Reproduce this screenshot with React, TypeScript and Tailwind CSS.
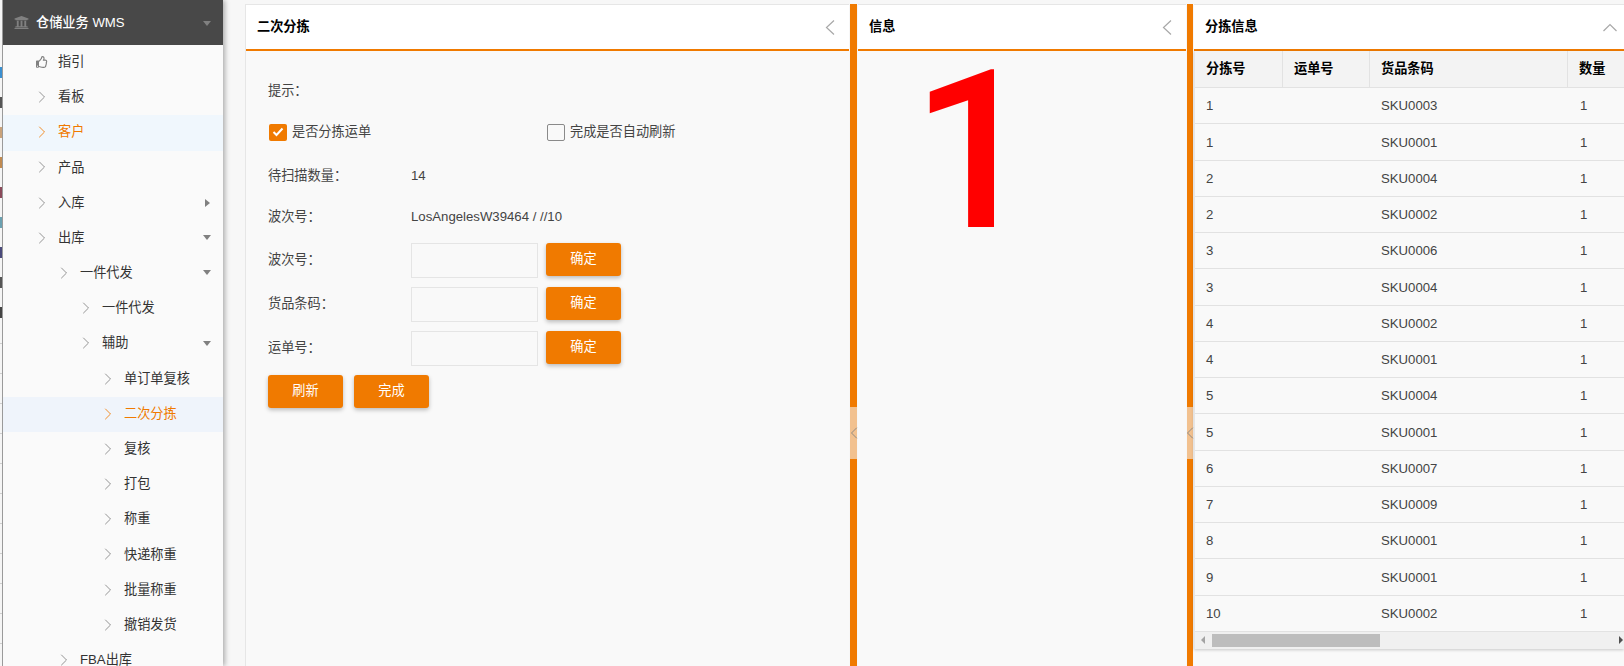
import { ChevronLeft, ChevronRight } from 'lucide-react'
import { FaRegThumbsUp, FaUniversity } from 'react-icons/fa'

type MenuItem = {
  label: string
  indent: number
  active?: boolean
  arrow?: 'right' | 'down'
  thumb?: boolean
  tint?: string
}

const menu: MenuItem[] = [
  { label: '指引', indent: 0, thumb: true },
  { label: '看板', indent: 0 },
  { label: '客户', indent: 0, active: true, tint: 'bg-[#f0f7fd]' },
  { label: '产品', indent: 0 },
  { label: '入库', indent: 0, arrow: 'right' },
  { label: '出库', indent: 0, arrow: 'down' },
  { label: '一件代发', indent: 1, arrow: 'down' },
  { label: '一件代发', indent: 2 },
  { label: '辅助', indent: 2, arrow: 'down' },
  { label: '单订单复核', indent: 3 },
  { label: '二次分拣', indent: 3, active: true, tint: 'bg-[#eff4fb]' },
  { label: '复核', indent: 3 },
  { label: '打包', indent: 3 },
  { label: '称重', indent: 3 },
  { label: '快递称重', indent: 3 },
  { label: '批量称重', indent: 3 },
  { label: '撤销发货', indent: 3 },
  { label: 'FBA出库', indent: 1 },
]

const rows = [
  ['1', 'SKU0003'],
  ['1', 'SKU0001'],
  ['2', 'SKU0004'],
  ['2', 'SKU0002'],
  ['3', 'SKU0006'],
  ['3', 'SKU0004'],
  ['4', 'SKU0002'],
  ['4', 'SKU0001'],
  ['5', 'SKU0004'],
  ['5', 'SKU0001'],
  ['6', 'SKU0007'],
  ['7', 'SKU0009'],
  ['8', 'SKU0001'],
  ['9', 'SKU0001'],
  ['10', 'SKU0002'],
]

const indentClass = ['pl-[30px]', 'pl-[52px]', 'pl-[74px]', 'pl-[96px]']

// the page behind the drawer peeks out by 2px at the left edge
const peekMarks = ['bg-[#f5f5f5]', 'bg-[#3a8fd0]', 'bg-[#555555]', 'bg-[#c9a27a]', 'bg-[#c08a50]', 'bg-[#8a4a5a]', 'bg-[#6aa0b0]', 'bg-[#4a4a7a]', 'bg-[#555555]', 'bg-[#444444]']

function LeftPeek() {
  return (
    <div className="w-[3px] shrink-0 bg-[#f5f5f5] border-r border-[#9a9a9a] overflow-hidden">
      <div className="h-[27px]" />
      {peekMarks.map((color, i) => (
        <div key={i} className="h-[30px] flex items-center">
          <div className={`h-[11px] w-full ${color}`} />
        </div>
      ))}
      <div className="h-[17px] border-b border-[#cfcfcf]" />
      {Array.from({ length: 11 }).map((_, i) => (
        <div key={i} className="h-[30px] border-b border-[#cfcfcf]" />
      ))}
    </div>
  )
}

function Sidebar() {
  return (
    <aside className="w-[223px] h-[666px] shrink-0 overflow-hidden flex bg-[#fafafa] shadow-[2px_0_5px_rgba(0,0,0,0.3)] relative z-10">
      <LeftPeek />
      <div className="flex-1 min-w-0">
        <div className="h-[45px] bg-[#484848] flex items-center pl-[11px] pr-[12px]">
          <FaUniversity size={15} className="text-[#808080]" />
          <span className="ml-[7px] text-[13.2px] text-white font-medium">仓储业务 WMS</span>
          <span className="ml-auto mt-[2px] w-0 h-0 border-x-[4px] border-x-transparent border-t-[5px] border-t-[#808080]" />
        </div>
        {menu.map((item, i) => (
          <div key={i} className={`h-[35.2px] pb-[1.5px] flex items-center pr-[12px] text-[13.2px] ${indentClass[item.indent]} ${item.tint ?? ''}`}>
            {item.thumb ? (
              <FaRegThumbsUp size={12} className="text-[#808080] ml-[3px] mr-[10px]" />
            ) : (
              <ChevronRight size={20} strokeWidth={1} className={`-ml-px mr-[6px] ${item.active ? 'text-[#f07a00]' : 'text-[#808080]'}`} />
            )}
            <span className={item.active ? 'text-[#f07a00]' : 'text-[#333333]'}>{item.label}</span>
            {item.arrow === 'down' && (
              <span className="ml-auto w-0 h-0 border-x-[4px] border-x-transparent border-t-[5px] border-t-[#808080]" />
            )}
            {item.arrow === 'right' && (
              <span className="ml-auto mr-[1px] w-0 h-0 border-y-[4px] border-y-transparent border-l-[5px] border-l-[#808080]" />
            )}
          </div>
        ))}
      </div>
    </aside>
  )
}

function CollapseLeft() {
  return (
    <svg width="10" height="15" viewBox="0 0 10 15" className="text-[#a8a8a8]">
      <path d="M9 0.5L1.5 7.5L9 14.5" fill="none" stroke="currentColor" strokeWidth="1.2" />
    </svg>
  )
}

function CollapseUp() {
  return (
    <svg width="14" height="9" viewBox="0 0 14 9" className="text-[#a8a8a8] -mr-[7px]">
      <path d="M0.5 8L7 1.5L13.5 8" fill="none" stroke="currentColor" strokeWidth="1.2" />
    </svg>
  )
}

function PanelHeader({ title, icon }: { title: string; icon: React.ReactNode }) {
  return (
    <div className="h-[47px] shrink-0 bg-white border-t border-[#e6e6e6] border-b-2 border-b-[#f07a00] flex items-center justify-between pl-[11px] pr-[14px]">
      <span className="text-[13.2px] font-bold text-black">{title}</span>
      {icon}
    </div>
  )
}

function Splitter({ width }: { width: string }) {
  return (
    <div className={`${width} mx-px shrink-0 h-full bg-[#f07a00] flex flex-col`}>
      <div className="h-[403px]" />
      <div className="h-[52px] bg-[#f2c18f] flex items-center justify-center">
        <ChevronLeft size={20} strokeWidth={1} className="text-[#808080] shrink-0" />
      </div>
    </div>
  )
}

function ConfirmRow({ label }: { label: string }) {
  return (
    <div className="h-[44px] flex items-start">
      <span className="w-[143px] mt-[7px] text-[#444444]">{label}</span>
      <input className="w-[127px] h-[35px] border border-[#e5e5e5] bg-transparent" />
      <button className="ml-[8px] w-[75px] h-[33px] pb-[2px] rounded-[3px] bg-[#f07a00] text-white shadow-[0_2px_4px_rgba(0,0,0,0.25)]">确定</button>
    </div>
  )
}

function SortPanel() {
  return (
    <section className="w-[604px] shrink-0 h-full border-l border-[#e6e6e6] bg-[#f9f9f9] flex flex-col">
      <PanelHeader title="二次分拣" icon={<CollapseLeft />} />
      <div className="pl-[22px] pt-[30px] text-[13.2px] text-[#444444]">
        <div className="h-[20px]">提示：</div>
        <div className="mt-[21px] h-[20px] flex items-center">
          <span className="ml-px w-[18px] h-[17px] rounded-[2px] bg-[#f07a00] flex items-center justify-center">
            <svg width="12" height="10" viewBox="0 0 12 10"><path d="M1.5 5l3 3 6-6.5" fill="none" stroke="white" strokeWidth="2" /></svg>
          </span>
          <span className="ml-[5px] w-[255px]">是否分拣运单</span>
          <span className="w-[18px] h-[17px] rounded-[2px] border border-[#8a8a8a]" />
          <span className="ml-[5px]">完成是否自动刷新</span>
        </div>
        <div className="mt-[24px] h-[20px] flex">
          <span className="w-[143px]">待扫描数量：</span>
          <span>14</span>
        </div>
        <div className="mt-[21px] h-[20px] flex">
          <span className="w-[143px]">波次号：</span>
          <span>LosAngelesW39464 / //10</span>
        </div>
        <div className="mt-[16px]">
          <ConfirmRow label="波次号：" />
          <ConfirmRow label="货品条码：" />
          <ConfirmRow label="运单号：" />
        </div>
        <div className="flex gap-[11px]">
          <button className="w-[75px] h-[33px] pb-[2px] rounded-[3px] bg-[#f07a00] text-white shadow-[0_2px_4px_rgba(0,0,0,0.25)]">刷新</button>
          <button className="w-[75px] h-[33px] pb-[2px] rounded-[3px] bg-[#f07a00] text-white shadow-[0_2px_4px_rgba(0,0,0,0.25)]">完成</button>
        </div>
      </div>
    </section>
  )
}

function InfoPanel() {
  return (
    <section className="w-[328px] shrink-0 h-full bg-[#f9f9f9] flex flex-col">
      <PanelHeader title="信息" icon={<CollapseLeft />} />
      <div className="flex justify-center pr-[96px]">
        <span className="text-[220px] leading-[202px] font-medium text-[#ff0000] font-['Roboto',sans-serif]">1</span>
      </div>
    </section>
  )
}

function TablePanel() {
  return (
    <section className="flex-1 min-w-0 h-full bg-[#f9f9f9] flex flex-col">
      <PanelHeader title="分拣信息" icon={<CollapseUp />} />
      <div className="shadow-[0_1px_3px_rgba(0,0,0,0.2)] border-l border-[#e6e6e6]">
        <div className="h-[37px] flex bg-[#f3f3f3] border-b border-[#e2e2e2] text-[13.2px] font-bold text-black items-center">
          <span className="w-[88px] h-full flex items-center pl-[11px] border-r border-[#e2e2e2]">分拣号</span>
          <span className="w-[87px] h-full flex items-center pl-[11px] border-r border-[#e2e2e2]">运单号</span>
          <span className="w-[198px] h-full flex items-center pl-[11px] border-r border-[#e2e2e2]">货品条码</span>
          <span className="pl-[11px]">数量</span>
        </div>
        {rows.map((row, i) => (
          <div key={i} className="h-[36.27px] pt-px flex items-center border-b border-[#e2e2e2] text-[13.2px] text-[#444444]">
            <span className="w-[88px] pl-[11px]">{row[0]}</span>
            <span className="w-[87px]" />
            <span className="w-[198px] pl-[11px]">{row[1]}</span>
            <span className="pl-[12px]">1</span>
          </div>
        ))}
        <div className="h-[17px] bg-[#f0f0f0] flex items-center">
          <span className="ml-[6px] w-0 h-0 border-y-[4px] border-y-transparent border-r-[4px] border-r-[#a3a3a3]" />
          <span className="ml-[7px] w-[168px] h-[13px] bg-[#bdbdbd]" />
          <span className="ml-auto mr-[1px] w-0 h-0 border-y-[4px] border-y-transparent border-l-[4px] border-l-[#505050]" />
        </div>
      </div>
    </section>
  )
}

export default function App() {
  return (
    <div className="w-[1624px] h-[666px] overflow-hidden flex bg-[#f7f7f7] font-['Liberation_Sans','Noto_Sans_CJK_SC',sans-serif]">
      <Sidebar />
      <main className="flex-1 min-w-0 flex pl-[22px] pt-[4px] h-full">
        <SortPanel />
        <Splitter width="w-[7px]" />
        <InfoPanel />
        <Splitter width="w-[6px]" />
        <TablePanel />
      </main>
    </div>
  )
}
